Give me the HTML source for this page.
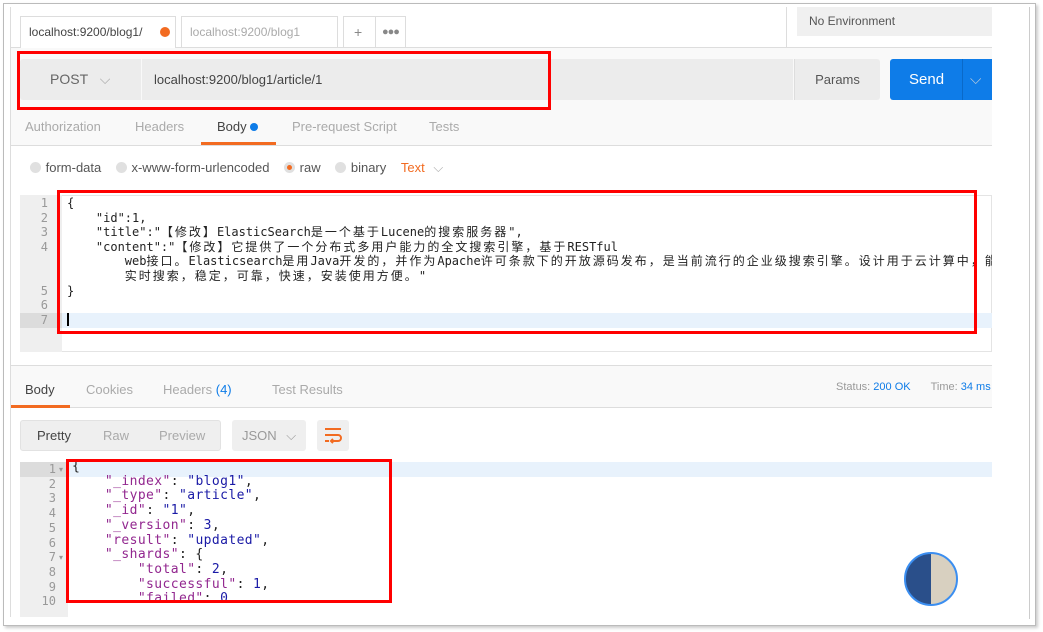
<!DOCTYPE html><html><head><meta charset="utf-8"><style>
body{margin:0;width:1043px;height:632px;background:#fff;position:relative;overflow:hidden;font-family:"Liberation Sans","Noto Sans CJK SC",sans-serif;}
.a{position:absolute}
.mono{font-family:"DejaVu Sans Mono","Noto Sans CJK SC",monospace;font-size:12px;white-space:pre;color:#222}
.c{letter-spacing:2px}
.red{position:absolute;border:3px solid #f00;box-sizing:border-box}
.ln{position:absolute;font-family:"DejaVu Sans Mono",monospace;font-size:12px;color:#999;text-align:right}
</style></head><body>
<div class="a" style="left:3px;top:3px;width:1031px;height:621px;border:1px solid #bbb;box-shadow:2px 2px 3px #ccc"></div>
<div class="a" style="left:10px;top:7px;width:982px;height:610px;background:#fff;border-left:1px solid #ddd;overflow:hidden"></div>
<div class="a" style="left:1029px;top:7px;width:1px;height:612px;background:#ccc"></div>
<div class="a" style="left:11px;top:47px;width:981px;height:1px;background:#ddd"></div>
<div class="a" style="left:20px;top:16px;width:156px;height:32px;background:#fff;border:1px solid #ddd;border-bottom:none;box-sizing:border-box;font-size:12px;color:#444;line-height:30px;padding-left:8px">localhost:9200/blog1/<span class="a" style="left:139px;top:10px;width:10px;height:10px;border-radius:50%;background:#f26b21"></span></div>
<div class="a" style="left:181px;top:16px;width:157px;height:31px;border:1px solid #ddd;border-bottom:none;box-sizing:border-box;font-size:12px;color:#aaa;line-height:30px;padding-left:8px">localhost:9200/blog1</div>
<div class="a" style="left:343px;top:16px;width:63px;height:31px;border:1px solid #ddd;border-bottom:none;box-sizing:border-box;font-size:14px;color:#888;line-height:30px"><span style="position:absolute;left:10px">+</span><span style="position:absolute;left:31px;top:0;width:1px;height:31px;background:#ddd"></span><span style="position:absolute;left:38px;font-size:11px;letter-spacing:-1px">●●●</span></div>
<div class="a" style="left:797px;top:7px;width:195px;height:29px;background:#f0f0f0;font-size:12px;color:#555;line-height:29px;padding-left:12px;box-sizing:border-box">No Environment</div>
<div class="a" style="left:786px;top:7px;width:1px;height:40px;background:#ddd"></div>
<div class="a" style="left:11px;top:48px;width:981px;height:97px;background:#f9f9f9"></div>
<div class="a" style="left:20px;top:59px;width:121px;height:41px;background:#ececec;border-radius:3px 0 0 3px;font-size:14px;color:#666;line-height:41px;padding-left:30px;box-sizing:border-box">POST <span style="color:#aaa;margin-left:8px">⌵</span></div>
<div class="a" style="left:142px;top:59px;width:651px;height:41px;background:#ececec;font-size:13px;color:#444;line-height:41px;padding-left:12px;box-sizing:border-box">localhost:9200/blog1/article/1</div>
<div class="a" style="left:794px;top:59px;width:85px;height:41px;background:#ececec;border-left:1px solid #ddd;font-size:13px;color:#555;line-height:41px;text-align:center;border-radius:0 3px 3px 0">Params</div>
<div class="a" style="left:890px;top:59px;width:102px;height:41px;background:#0e7ce8;border-radius:3px 0 0 3px;font-size:15px;color:#fff;line-height:41px"><span style="position:absolute;left:19px">Send</span><span style="position:absolute;left:72px;top:0;width:1px;height:41px;background:#0a69c8"></span><span style="position:absolute;left:80px;color:#bcd">⌵</span></div>
<div class="red" style="left:17px;top:51px;width:534px;height:59px"></div>
<div class="a" style="left:11px;top:145px;width:981px;height:1px;background:#ddd"></div>
<div class="a" style="top:119px;font-size:13px;color:#aaa;left:25px">Authorization</div>
<div class="a" style="top:119px;font-size:13px;color:#aaa;left:135px">Headers</div>
<div class="a" style="top:119px;font-size:13px;color:#444;left:217px">Body <span style="display:inline-block;width:8px;height:8px;border-radius:50%;background:#0e7ce8"></span></div>
<div class="a" style="top:119px;font-size:13px;color:#aaa;left:292px">Pre-request Script</div>
<div class="a" style="top:119px;font-size:13px;color:#aaa;left:429px">Tests</div>
<div class="a" style="left:201px;top:142px;width:75px;height:3px;background:#f26b21"></div>
<div class="a" style="top:160px;font-size:13px;color:#555;left:30px;white-space:nowrap;word-spacing:1px">
<span style="display:inline-block;width:11px;height:11px;border-radius:50%;background:#e0e0e0;vertical-align:-1px"></span> form-data
<span style="display:inline-block;width:11px;height:11px;border-radius:50%;background:#e0e0e0;vertical-align:-1px;margin-left:10px"></span> x-www-form-urlencoded
<span style="display:inline-block;width:11px;height:11px;border-radius:50%;background:#e0e0e0;vertical-align:-1px;margin-left:10px;position:relative"><span style="position:absolute;left:3px;top:3px;width:5px;height:5px;border-radius:50%;background:#f26b21"></span></span> raw
<span style="display:inline-block;width:11px;height:11px;border-radius:50%;background:#e0e0e0;vertical-align:-1px;margin-left:10px"></span> binary
<span style="color:#f26b21;margin-left:10px">Text</span> <span style="color:#aaa;margin-left:4px">⌵</span></div>
<div class="a" style="left:20px;top:195px;width:972px;height:157px;border:1px solid #e4e4e4;box-sizing:border-box"></div>
<div class="a" style="left:20px;top:195px;width:42px;height:157px;background:#efefef"></div>
<div class="a" style="left:20px;top:313px;width:972px;height:15px;background:#e8f2fc"></div>
<div class="a" style="left:20px;top:313px;width:42px;height:15px;background:#dcdcdc"></div>
<div class="ln" style="left:20px;top:196px;width:28px;line-height:14.6px">1<br>2<br>3<br>4<br><br><br>5<br>6<br>7</div>
<div class="a mono" style="left:67px;top:196px;line-height:14.6px;width:925px;overflow:hidden">{
    "id":1,
    "title":"<span class="c">【修改】</span>ElasticSearch<span class="c">是一个基于</span>Lucene<span class="c">的搜索服务器</span>",
    "content":"<span class="c">【修改】它提供了一个分布式多用户能力的全文搜索引擎，基于</span>RESTful
        web<span class="c">接口。</span>Elasticsearch<span class="c">是用</span>Java<span class="c">开发的，并作为</span>Apache<span class="c">许可条款下的开放源码发布，是当前流行的企业级搜索引擎。设计用于云计算中，能够达到</span>
        <span class="c">实时搜索，稳定，可靠，快速，安装使用方便。</span>"
}

<span style="display:inline-block;width:2px;height:13px;background:#000;vertical-align:-2px"></span></div>
<div class="red" style="left:57px;top:190px;width:920px;height:144px"></div>
<div class="a" style="left:11px;top:365px;width:981px;height:1px;background:#ddd"></div>
<div class="a" style="left:11px;top:366px;width:981px;height:41px;background:#f9f9f9"></div>
<div class="a" style="left:11px;top:407px;width:981px;height:1px;background:#ddd"></div>
<div class="a" style="top:382px;font-size:13px;color:#444;left:25px">Body</div>
<div class="a" style="top:382px;font-size:13px;color:#aaa;left:86px">Cookies</div>
<div class="a" style="top:382px;font-size:13px;color:#aaa;left:163px">Headers <span style="color:#0e7ce8">(4)</span></div>
<div class="a" style="top:382px;font-size:13px;color:#aaa;left:272px">Test Results</div>
<div class="a" style="left:11px;top:405px;width:59px;height:3px;background:#f26b21"></div>
<div class="a" style="top:381px;font-size:11px;color:#999;left:836px;white-space:nowrap">Status: <span style="color:#0e7ce8">200 OK</span><span style="margin-left:20px">Time:</span> <span style="color:#0e7ce8">34 ms</span></div>
<div class="a" style="left:20px;top:420px;width:201px;height:31px;background:#efefef;border:1px solid #e2e2e2;box-sizing:border-box;border-radius:3px;font-size:13px;line-height:29px"><span style="position:absolute;left:16px;color:#444">Pretty</span><span style="position:absolute;left:82px;color:#aaa">Raw</span><span style="position:absolute;left:138px;color:#aaa">Preview</span></div>
<div class="a" style="left:232px;top:420px;width:74px;height:31px;background:#efefef;border-radius:3px;font-size:13px;line-height:31px;color:#999;padding-left:10px;box-sizing:border-box">JSON <span style="margin-left:6px">⌵</span></div>
<div class="a" style="left:317px;top:420px;width:32px;height:31px;background:#efefef;border-radius:3px"><svg width="32" height="31"><g stroke="#f26b21" stroke-width="2" fill="none"><path d="M8 9h16M8 15h13a3 3 0 0 1 0 6h-6M16 19l-2 2 2 2M8 21h4"/></g></svg></div>
<div class="a" style="left:20px;top:462px;width:972px;height:155px;background:#fff"></div>
<div class="a" style="left:20px;top:462px;width:48px;height:155px;background:#efefef"></div>
<div class="a" style="left:68px;top:462px;width:924px;height:15px;background:#e8f2fc"></div>
<div class="a" style="left:20px;top:462px;width:48px;height:15px;background:#dcdcdc"></div>
<div class="ln" style="left:20px;top:462px;width:36px;line-height:14.7px">1<br>2<br>3<br>4<br>5<br>6<br>7<br>8<br>9<br>10</div>
<div class="a" style="left:59px;top:463px;font-size:8px;color:#999;line-height:14.7px">▾<br><br><br><br><br><br>▾</div>
<div class="a mono" style="left:72px;top:460px;line-height:14.7px;font-size:13px;letter-spacing:0.4px;color:#222;height:148px;overflow:hidden">{
    <span style="color:#92278f">"_index"</span>: <span style="color:#1a1aa6">"blog1"</span>,
    <span style="color:#92278f">"_type"</span>: <span style="color:#1a1aa6">"article"</span>,
    <span style="color:#92278f">"_id"</span>: <span style="color:#1a1aa6">"1"</span>,
    <span style="color:#92278f">"_version"</span>: <span style="color:#1a1aa6">3</span>,
    <span style="color:#92278f">"result"</span>: <span style="color:#1a1aa6">"updated"</span>,
    <span style="color:#92278f">"_shards"</span>: {
        <span style="color:#92278f">"total"</span>: <span style="color:#1a1aa6">2</span>,
        <span style="color:#92278f">"successful"</span>: <span style="color:#1a1aa6">1</span>,
        <span style="color:#92278f">"failed"</span>: <span style="color:#1a1aa6">0</span></div>
<div class="red" style="left:66px;top:459px;width:326px;height:144px"></div>
<div class="a" style="left:904px;top:552px;width:50px;height:50px;border-radius:50%;border:2px solid #3b8ef0;overflow:hidden;background:linear-gradient(90deg,#2a4f8a 0 50%,#d8d0c0 50%)"></div>
</body></html>
